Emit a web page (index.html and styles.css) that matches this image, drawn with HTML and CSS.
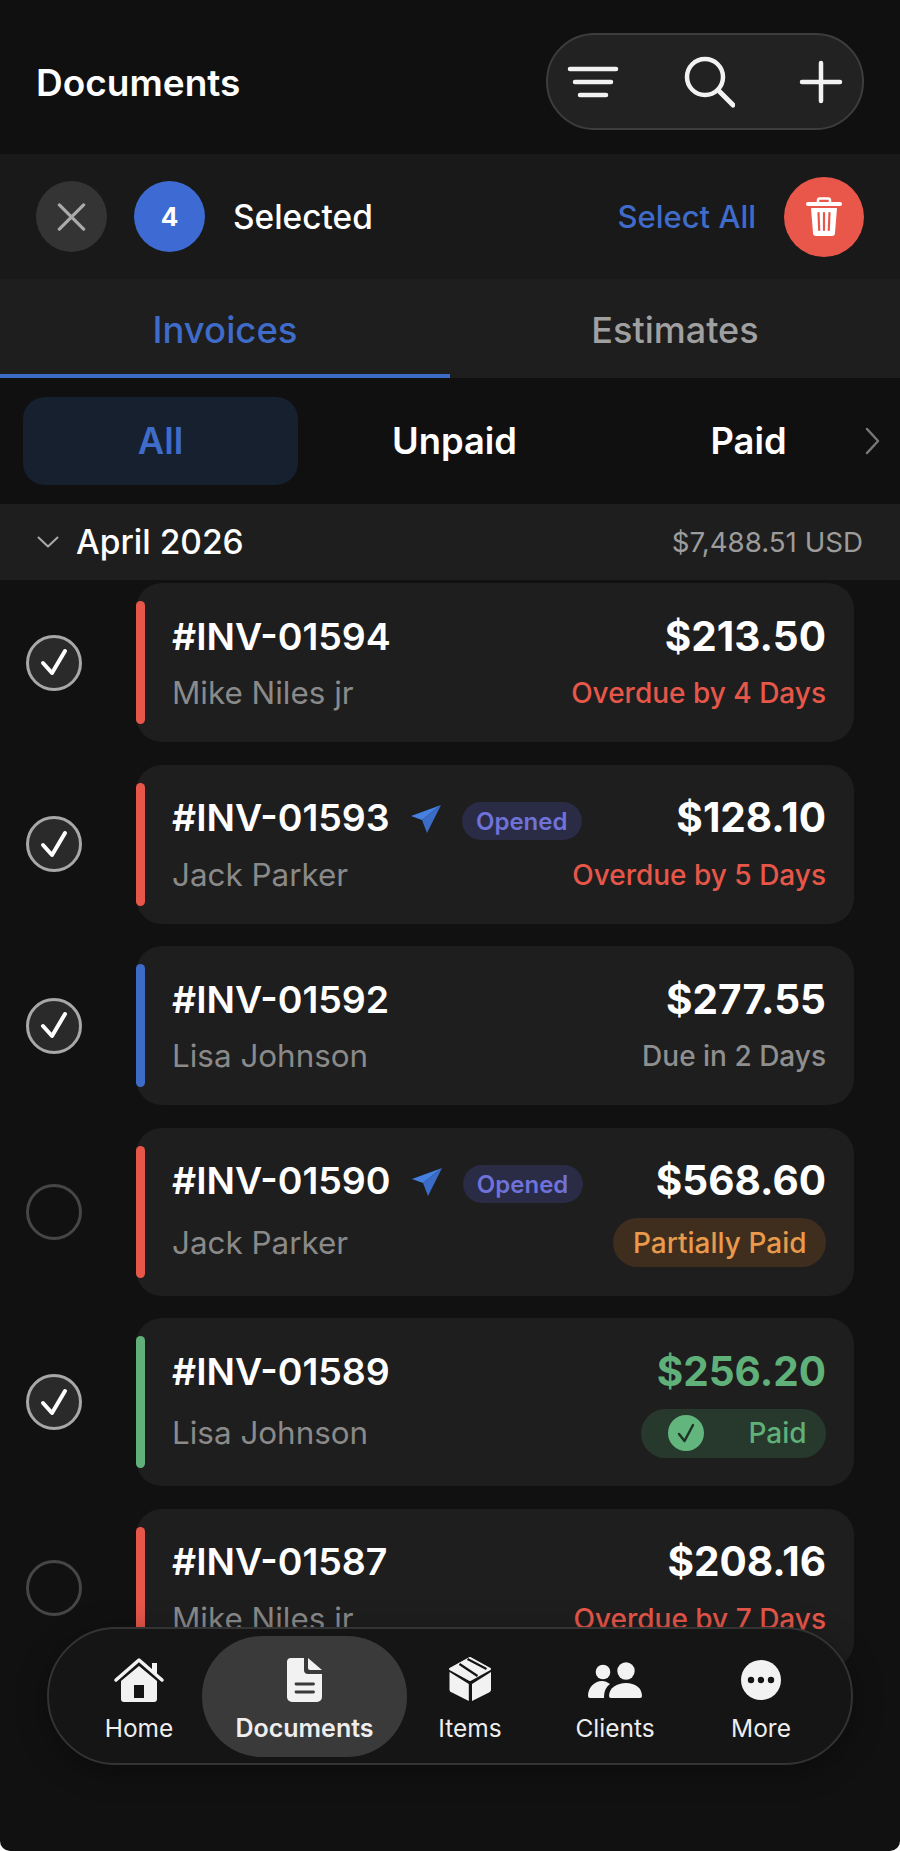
FILE: index.html
```html
<!DOCTYPE html>
<html lang="en">
<head>
<meta charset="utf-8">
<title>Documents</title>
<link rel="stylesheet" href="styles.css">
</head>
<body>
<svg class="defs" width="0" height="0" aria-hidden="true">
  <symbol id="tick" viewBox="0 0 57 57"><path d="M17 29 L26 39 L39 17" fill="none" stroke="#fff" stroke-width="4" stroke-linecap="round" stroke-linejoin="round"/></symbol>
  <symbol id="plane" viewBox="0 0 32 32"><path d="M31 2 L1 13 L12 17 Z" fill="#4680e0"/><path d="M31 2 L12 17 L17 30 Z" fill="#3a6cc8"/></symbol>
</svg>
<main class="screen">
  <header class="topbar">
    <h1 class="title">Documents</h1>
    <div class="tools">
      <svg class="tool" viewBox="0 0 56 56"><g stroke="#f2f2f2" stroke-width="4.5" stroke-linecap="round"><path d="M5 15H51"/><path d="M10 28H46"/><path d="M15 41H41"/></g></svg>
      <svg class="tool" viewBox="0 0 56 56"><circle cx="26" cy="23" r="18" fill="none" stroke="#f2f2f2" stroke-width="4.5"/><path d="M39 36L54 51" stroke="#f2f2f2" stroke-width="5" stroke-linecap="round"/></svg>
      <svg class="tool" viewBox="0 0 56 56"><path d="M28 9V47M9 28H47" stroke="#f2f2f2" stroke-width="4.5" stroke-linecap="round"/></svg>
    </div>
  </header>

  <section class="selbar">
    <span class="close"><svg viewBox="0 0 30 30" class="close-icon"><path d="M2 2L28 28M28 2L2 28" stroke="#aaa" stroke-width="3.5" stroke-linecap="round"/></svg></span>
    <span class="count">4</span>
    <span class="sel-text">Selected</span>
    <span class="sel-all">Select All</span>
    <span class="trash"><svg viewBox="0 0 36 40" class="trash-icon"><path d="M12 5V3.500A2 2 0 0 1 14 1.500H22A2 2 0 0 1 24 3.500V5" fill="none" stroke="#fff" stroke-width="2.500"/><path d="M2 7H34" stroke="#fff" stroke-width="4" stroke-linecap="round"/><path d="M5 11H31L29 36A3 3 0 0 1 26 39H10A3 3 0 0 1 7 36Z" fill="#fff"/><path d="M12.500 16L13.200 33M18 16V33M23.500 16L22.800 33" stroke="#e9574a" stroke-width="2.200" stroke-linecap="round"/></svg></span>
  </section>

  <nav class="tabs">
    <span class="tab tab-on">Invoices</span>
    <span class="tab">Estimates</span>
  </nav>

  <div class="filters">
    <span class="filter filter-on">All</span>
    <span class="filter">Unpaid</span>
    <span class="filter">Paid</span>
    <svg class="more-filters" viewBox="0 0 16 30"><path d="M2 2L14 15L2 28" fill="none" stroke="#777" stroke-width="2.500" stroke-linecap="round" stroke-linejoin="round"/></svg>
  </div>

  <div class="month">
    <svg class="month-chev" viewBox="0 0 22 12"><path d="M1.500 1.500L11 10.500L20.500 1.500" fill="none" stroke="#aaa" stroke-width="2" stroke-linecap="round" stroke-linejoin="round"/></svg>
    <span class="month-name">April 2026</span>
    <span class="month-total">$7,488.51 USD</span>
  </div>

  <div class="list">
    <article class="row">
      <span class="check check-on"><svg class="tick"><use href="#tick"/></svg></span>
      <div class="card">
        <i class="bar bar-red"></i>
        <div class="line"><span class="inv">#INV-01594</span><span class="amount">$213.50</span></div>
        <div class="line"><span class="client">Mike Niles jr</span><span class="status red">Overdue by 4 Days</span></div>
      </div>
    </article>
    <article class="row">
      <span class="check check-on"><svg class="tick"><use href="#tick"/></svg></span>
      <div class="card">
        <i class="bar bar-red"></i>
        <div class="line"><span class="inv">#INV-01593</span><svg class="plane"><use href="#plane"/></svg><span class="opened">Opened</span><span class="amount">$128.10</span></div>
        <div class="line"><span class="client">Jack Parker</span><span class="status red">Overdue by 5 Days</span></div>
      </div>
    </article>
    <article class="row">
      <span class="check check-on"><svg class="tick"><use href="#tick"/></svg></span>
      <div class="card">
        <i class="bar bar-blue"></i>
        <div class="line"><span class="inv">#INV-01592</span><span class="amount">$277.55</span></div>
        <div class="line"><span class="client">Lisa Johnson</span><span class="status grey">Due in 2 Days</span></div>
      </div>
    </article>
    <article class="row">
      <span class="check"></span>
      <div class="card card-tall">
        <i class="bar bar-red"></i>
        <div class="line"><span class="inv">#INV-01590</span><svg class="plane"><use href="#plane"/></svg><span class="opened">Opened</span><span class="amount">$568.60</span></div>
        <div class="line"><span class="client">Jack Parker</span><span class="pill pill-partial">Partially Paid</span></div>
      </div>
    </article>
    <article class="row">
      <span class="check check-on"><svg class="tick"><use href="#tick"/></svg></span>
      <div class="card card-tall">
        <i class="bar bar-green"></i>
        <div class="line"><span class="inv">#INV-01589</span><span class="amount green">$256.20</span></div>
        <div class="line"><span class="client">Lisa Johnson</span><span class="pill pill-paid"><svg class="paid-icon" viewBox="0 0 36 36"><circle cx="18" cy="18" r="18" fill="#62b67d"/><path d="M11 19L16.500 26L25 10" fill="none" stroke="#1e3325" stroke-width="2.500" stroke-linecap="round" stroke-linejoin="round"/></svg>Paid</span></div>
      </div>
    </article>
    <article class="row">
      <span class="check"></span>
      <div class="card">
        <i class="bar bar-red"></i>
        <div class="line"><span class="inv">#INV-01587</span><span class="amount">$208.16</span></div>
        <div class="line"><span class="client">Mike Niles jr</span><span class="status red">Overdue by 7 Days</span></div>
      </div>
    </article>
  </div>

  <nav class="dock">
    <a class="dock-item">
      <svg class="dock-icon" viewBox="0 0 60 60"><path d="M43 13H48V26L43 22Z" fill="#f2f2f2"/><path d="M7 30L30 10L53 30" fill="none" stroke="#f2f2f2" stroke-width="3.500" stroke-linecap="round" stroke-linejoin="round"/><path fill-rule="evenodd" d="M12 31L30 16L48 31V49A3 3 0 0 1 45 52H15A3 3 0 0 1 12 49ZM25 35V48H35V35Z" fill="#f2f2f2"/></svg>
      <span>Home</span>
    </a>
    <a class="dock-item dock-on">
      <svg class="dock-icon" viewBox="0 0 60 60"><path d="M16 8H29V20A4 4 0 0 0 33 24H47V47A5 5 0 0 1 42 52H17A5 5 0 0 1 12 47V12A4 4 0 0 1 16 8Z" fill="#f2f2f2"/><path d="M33 8L47 20H35A2 2 0 0 1 33 18Z" fill="#f2f2f2"/><path d="M21 34H38.500M21 42H38.500" stroke="#3a3a3a" stroke-width="2.800" stroke-linecap="round"/></svg>
      <span>Documents</span>
    </a>
    <a class="dock-item">
      <svg class="dock-icon" viewBox="0 0 60 60"><path d="M30 8L50 19L30 30L10 19Z" fill="#f2f2f2" stroke="#f2f2f2" stroke-width="2" stroke-linejoin="round"/><path d="M19.500 14L37.500 26M27.500 9L46.500 19" stroke="#141414" stroke-width="2.200"/><path d="M9.500 22L28.800 34V51L12 42.500A3 3 0 0 1 9.500 40Z" fill="#f2f2f2"/><path d="M51 22L32 34V51L49 42.500A3 3 0 0 0 51 40Z" fill="#f2f2f2"/></svg>
      <span>Items</span>
    </a>
    <a class="dock-item">
      <svg class="dock-icon" viewBox="0 0 60 60"><circle cx="18" cy="22" r="7.300" fill="#f2f2f2"/><circle cx="41" cy="21" r="8.700" fill="#f2f2f2"/><path d="M5 48H19C19 41 21 37 25 34C22 32 20 31 17 31C9 31 3 38 3 46A2 2 0 0 0 5 48Z" fill="#f2f2f2"/><path d="M26 48H55A2 2 0 0 0 57 46C57 38 50 33 41 33C32 33 24 38 24 46A2 2 0 0 0 26 48Z" fill="#f2f2f2"/></svg>
      <span>Clients</span>
    </a>
    <a class="dock-item">
      <svg class="dock-icon" viewBox="0 0 60 60"><circle cx="30" cy="30" r="20" fill="#f2f2f2"/><circle cx="20" cy="30" r="3.200" fill="#141414"/><circle cx="30" cy="30" r="3.200" fill="#141414"/><circle cx="40" cy="30" r="3.200" fill="#141414"/></svg>
      <span>More</span>
    </a>
  </nav>
</main>
</body>
</html>
```

FILE: styles.css
```css
* { box-sizing: border-box; }
html, body { margin: 0; padding: 0; background: #fff; }
body { font-family: Inter, "Liberation Sans", sans-serif; color: #fff; }
.defs { position: absolute; }
.screen { position: relative; width: 900px; height: 1851px; overflow: hidden; background: #111112; border-radius: 0 0 10px 10px; }

.topbar { height: 154px; padding: 33px 36px 24px 36px; display: flex; align-items: center; justify-content: space-between; background: #101011; }
.title { margin: 0; padding-top: 2px; font-size: 37px; font-weight: 600; }
.tools { width: 318px; height: 97px; padding: 0 13px 0 17px; display: flex; align-items: center; justify-content: space-between; background: #222; border: 2px solid #3d3d3d; border-radius: 49px; }
.tool { width: 56px; height: 56px; flex: none; }

.selbar { height: 125px; padding: 0 36px; display: flex; align-items: center; background: #191919; }
.close, .count { width: 71px; height: 71px; border-radius: 50%; display: flex; align-items: center; justify-content: center; flex: none; }
.close { background: #343434; margin-right: 27px; }
.close-icon { width: 29px; height: 28px; }
.count { background: #3d6bd3; font-size: 26px; font-weight: 700; margin-right: 28px; }
.sel-text { font-size: 33.400px; font-weight: 500; }
.sel-all { margin-left: auto; font-size: 31px; font-weight: 500; color: #3f6bc9; }
.trash { width: 80px; height: 80px; margin-left: 28px; border-radius: 50%; background: #e9574a; display: flex; align-items: center; justify-content: center; }
.trash-icon { width: 36px; height: 40px; }

.tabs { height: 99px; display: flex; background: #1e1e1e; }
.tab { width: 450px; display: flex; align-items: center; justify-content: center; padding-top: 2px; font-size: 36px; font-weight: 500; color: #a0a0a0; }
.tab-on { padding-top: 6px; font-size: 36.500px; color: #3f6bc9; border-bottom: 4px solid #3d6bc8; }

.filters { position: relative; height: 126px; padding: 19px 0 19px 23px; display: grid; grid-template-columns: repeat(3, 275px); column-gap: 19px; background: #101011; }
.filter { display: flex; align-items: center; justify-content: center; font-size: 36.300px; font-weight: 600; border-radius: 22px; }
.filter-on { background: #16202f; color: #3f6bc9; }
.more-filters { position: absolute; right: 20px; top: 49px; width: 15px; height: 28px; }

.month { height: 76px; padding: 0 37px; display: flex; align-items: center; background: #1e1e1e; }
.month-chev { width: 22px; height: 12px; margin-right: 17px; }
.month-name { font-size: 33.500px; font-weight: 500; }
.month-total { margin-left: auto; font-size: 27.700px; font-weight: 400; color: #9c9c9c; }

.list { padding: 3px 46px 0 26px; display: flex; flex-direction: column; gap: 22.500px; }
.row { display: flex; align-items: center; gap: 53px; }
.check { width: 56px; height: 56px; flex: none; border-radius: 50%; border: 3px solid #464646; }
.check-on { border-color: #a8a8a8; background: #2a2a2a; position: relative; }
.tick { position: absolute; left: -3.500px; top: -3.500px; width: 57px; height: 57px; }

.card { position: relative; flex: 1; margin-left: 1px; height: 159px; padding: 28.500px 28px 0 36px; display: flex; flex-direction: column; gap: 10.500px; background: #1e1e1e; border-radius: 26px; }
.card-tall { height: 168px; gap: 13px; }
.bar { position: absolute; left: 0; top: 18px; bottom: 18px; width: 9px; border-radius: 5px; }
.bar-red { background: #e6574a; }
.bar-blue { background: #3d6bc8; }
.bar-green { background: #5fb079; }

.line { display: flex; align-items: center; min-height: 44px; }
.inv { font-size: 37.500px; font-weight: 600; }
.amount { margin-left: auto; font-size: 40.500px; font-weight: 700; }
.client { font-size: 31.400px; font-weight: 400; color: #8a8a8a; }
.status { margin-left: auto; font-size: 28px; font-weight: 500; }
.red { color: #e6574a; }
.grey { color: #8f8f8f; }
.green { color: #5fb079; }
.plane { width: 32px; height: 32px; margin: 3px 0 0 20px; }
.opened { margin: 7px 0 0 20px; width: 120px; height: 38px; display: flex; align-items: center; justify-content: center; border-radius: 19px; background: #2a2b45; color: #6f72d8; font-size: 24px; font-weight: 600; }
.pill { margin-left: auto; height: 49px; padding: 0 19.500px; display: flex; align-items: center; border-radius: 25px; font-size: 28px; font-weight: 500; }
.pill-partial { background: #3f2e1e; color: #e99a4c; }
.pill-paid { width: 185px; padding-left: 27px; justify-content: space-between; background: #27392c; color: #5fb079; }
.paid-icon { width: 36px; height: 36px; }

.dock { position: absolute; left: 47px; top: 1627px; width: 806px; height: 138px; padding: 7px 0 0 27px; display: grid; grid-template-columns: 126px 205px 126px 164px 128px; grid-template-rows: 121px; background: #151515; border: 2px solid #333; border-radius: 69px; box-shadow: 0 6px 30px rgba(0, 0, 0, 0.35); }
.dock-item { display: flex; flex-direction: column; align-items: center; padding-top: 14px; border-radius: 60px; font-size: 24.500px; font-weight: 400; color: #eee; }
.dock-on { background: #3a3a3a; font-size: 25px; font-weight: 600; }
.dock-icon { width: 60px; height: 60px; flex: none; margin-bottom: 3px; }
```
